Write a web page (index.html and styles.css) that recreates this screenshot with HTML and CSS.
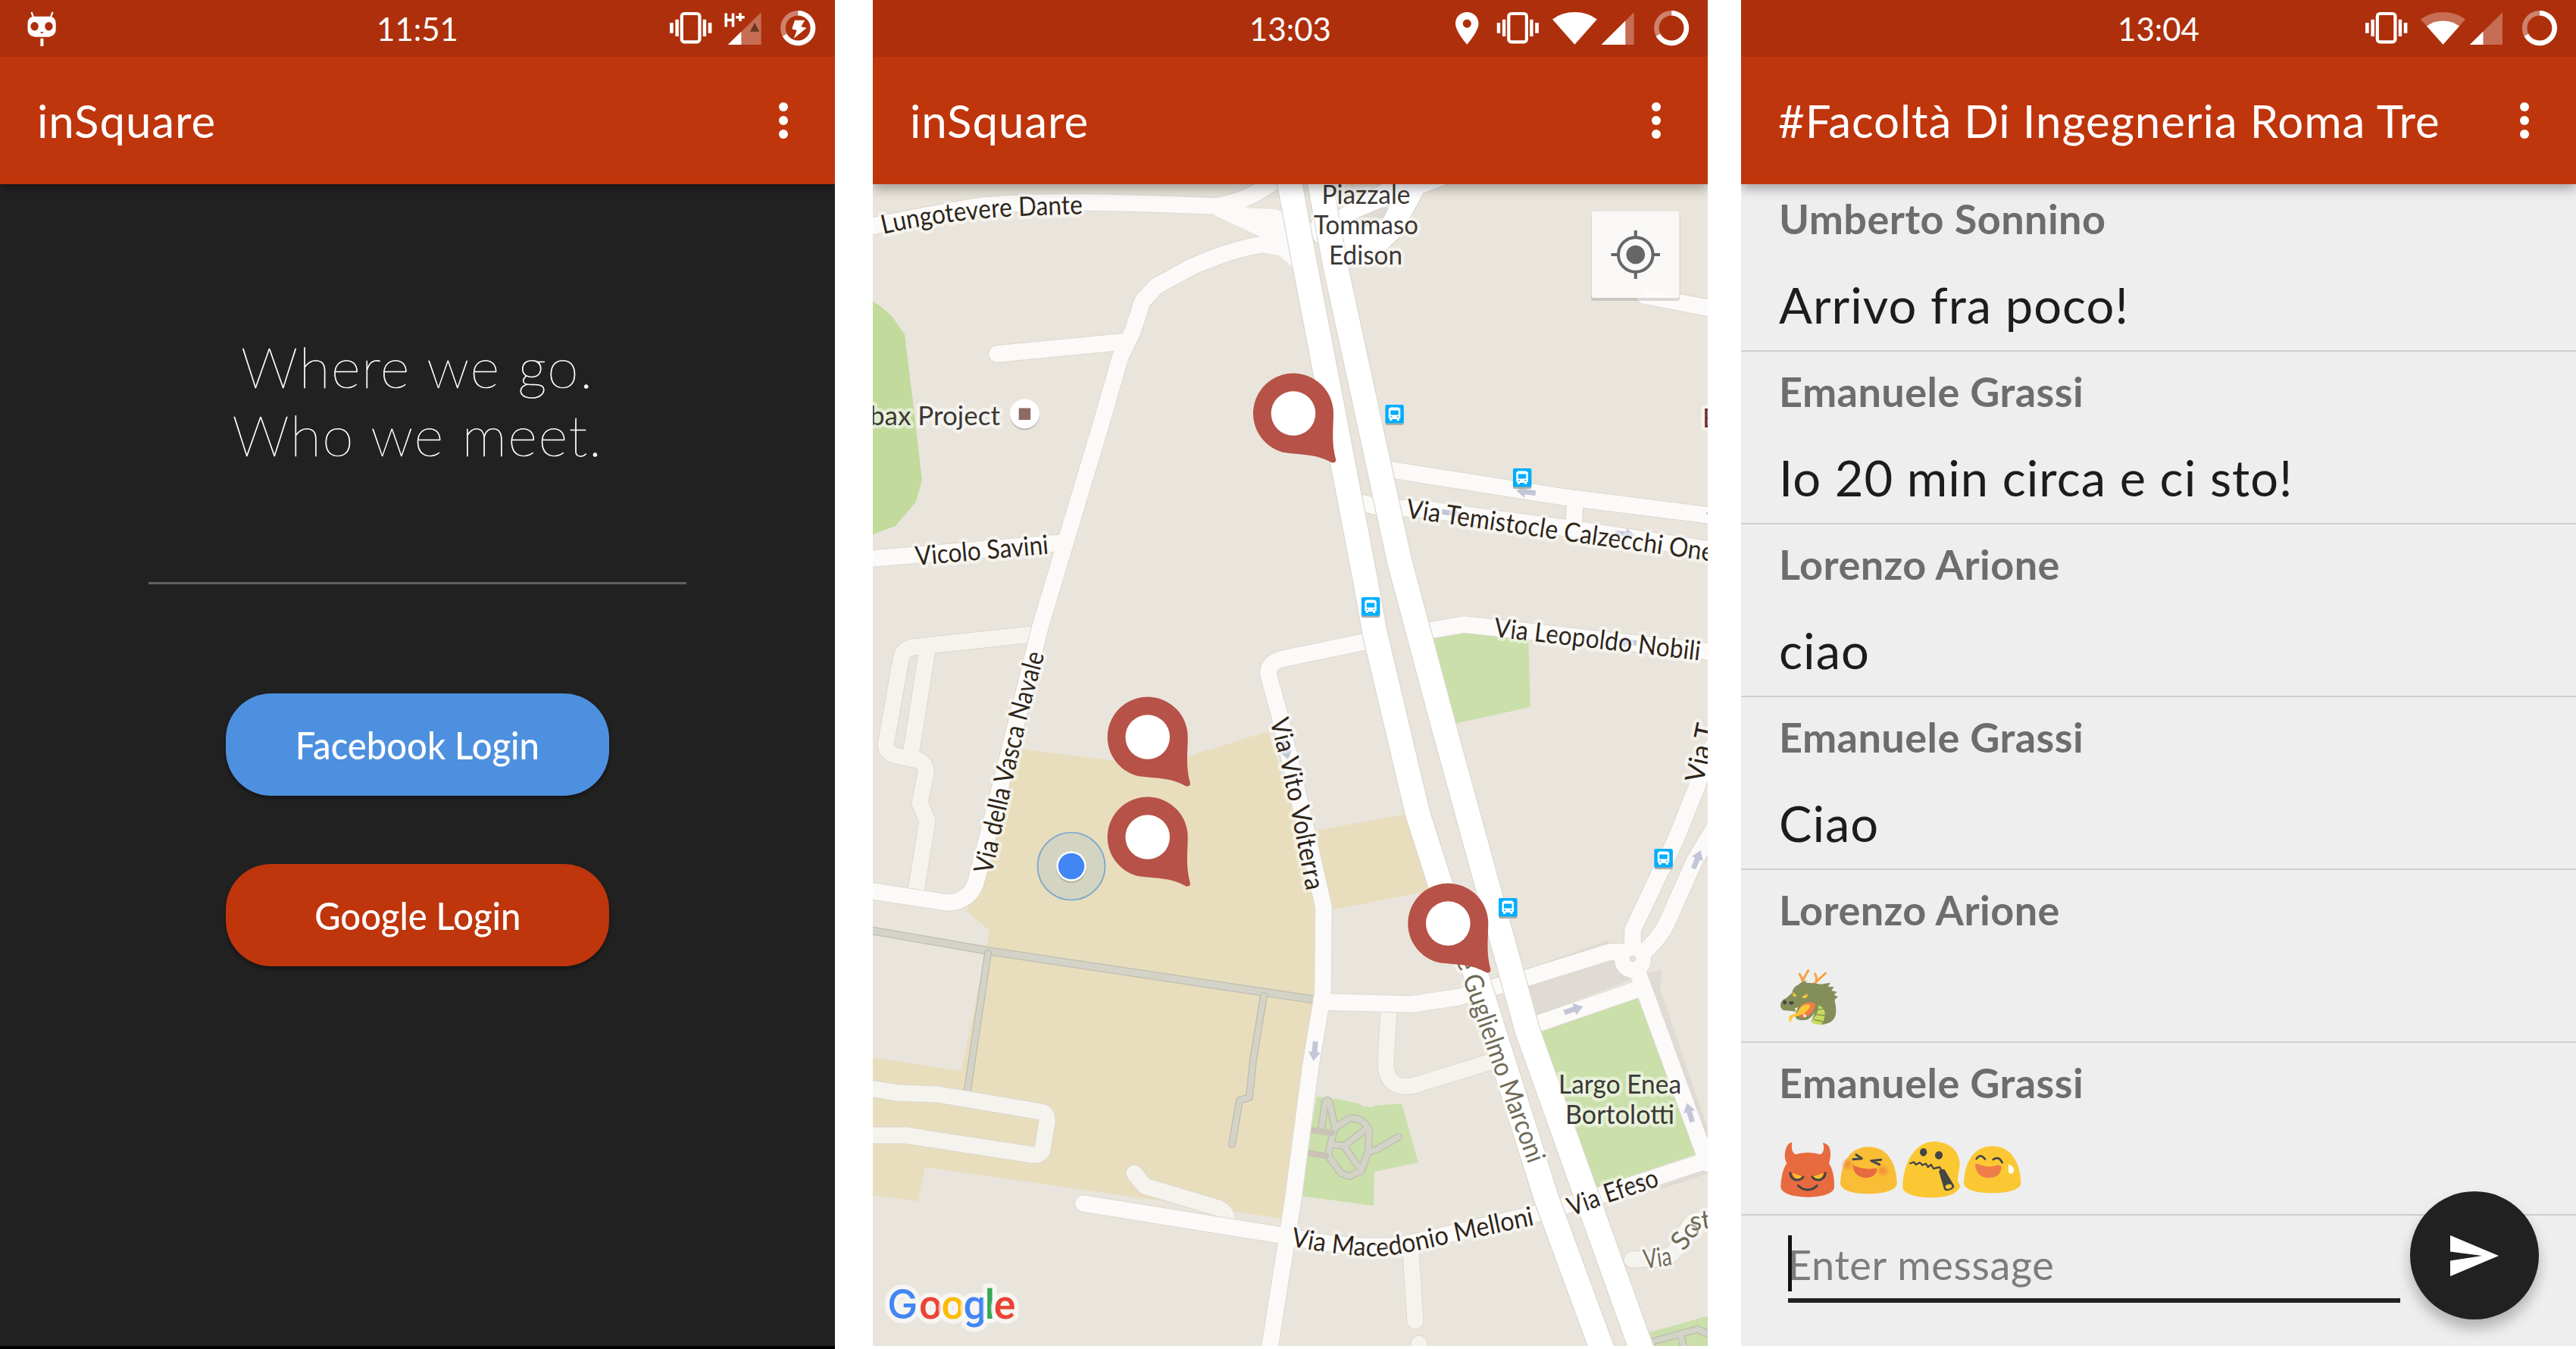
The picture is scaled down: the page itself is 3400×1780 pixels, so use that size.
FILE: index.html
```html
<!DOCTYPE html>
<html lang="it">
<head>
<meta charset="utf-8">
<title>inSquare</title>
<link rel="stylesheet" href="styles.css">
</head>
<body>
<svg class="sprites" aria-hidden="true">
  <defs>
    <symbol id="vibrate" viewBox="0 0 56 75">
      <rect x="15.8" y="18" width="23.6" height="37.3" rx="3.5" fill="none" stroke="#fff" stroke-width="4.2"/>
      <path fill="#fff" d="M7.4 25.7h4.4V48H7.4zM0 30h4.7v13.7H0zM43.7 25.7h4.4V48h-4.4zM50.7 30h4.7v13.7h-4.7z"/>
    </symbol>
    <symbol id="battery" viewBox="0 0 48 75">
      <circle cx="24" cy="37" r="19.8" fill="none" stroke="#fff" stroke-opacity=".4" stroke-width="6.6"/>
      <path d="M24 17.2A19.8 19.8 0 1 1 6.4 46.3" fill="none" stroke="#fff" stroke-width="6.6"/>
    </symbol>
    <symbol id="pin" viewBox="-60 -60 124 134">
      <path fill="#b65247" d="M53 0C53 20 50 38 56 60Q57 65.500 51 65C30 53 12 55-13 51.400A53 53 0 1 1 53 0Z"/>
      <circle r="29.300" fill="#fff"/>
    </symbol>
    <symbol id="bus" viewBox="0 0 26 30">
      <rect y="2.500" width="24.500" height="24.500" rx="2" fill="#b3aea6"/>
      <rect width="24.500" height="24.500" rx="2" fill="#00aeff"/>
      <path fill="#fff" d="M7 3.500h10.500l2.500 2V18h-1.500v3h-3v-2h-6.500v2h-3v-3H4.500V5.500z"/>
      <path fill="#00aeff" d="M7 7.500h10.500v6H7zM7 15.500h2v1.500H7zM15.500 15.500h2v1.500h-2z"/>
    </symbol>
    <symbol id="arrow" viewBox="-14 -9 28 18">
      <path fill="#c3c6d8" d="M-13-3.500H1V-8L13 0 1 8V3.500H-13z"/>
    </symbol>
  </defs>
</svg>

<main class="screens">
  <section class="screen screen-login">
    <header class="top">
      <div class="status">
        <svg class="status-left" width="52" height="75" viewBox="30 0 52 75">
          <path d="M41.500 16l3 8M69.500 16l-3 8" stroke="#fff" stroke-width="2.200" fill="none"/>
          <path fill="#fff" d="M46 21.700h18.500q9.200 0 9.200 9.300v7q0 10.800-12 10.800H49Q36.500 48.800 36.500 38v-7q0-9.300 9.500-9.300zM53.400 50.700h4V61h-4z"/>
          <ellipse cx="45.600" cy="34.800" rx="5.200" ry="5.700" fill="#ae2f0b"/>
          <ellipse cx="64.400" cy="34.800" rx="5.200" ry="5.700" fill="#ae2f0b"/>
          <path d="M53 42h4.600l-2.300 2.600z" fill="#ae2f0b"/>
        </svg>
        <time class="clock">11:51</time>
        <svg class="status-right" width="218" height="75" viewBox="884 0 218 75">
          <use href="#vibrate" x="884" y="0" width="56" height="75"/>
          <path fill="#fff" fill-opacity=".3" d="M960.700 59h44V16.300z"/>
          <path fill="#fff" d="M960.700 59h17.700V41.800z"/>
          <path fill="#6a3527" d="M996 30l6.300 11.700H990z"/>
          <path stroke="#fff" stroke-width="3.600" fill="none" d="M958.200 17.600v17.800M967.500 17.600v17.800M958.200 26.500h9.300M971.300 22.700h11.400M977 17.300v10.800"/>
          <use href="#battery" x="1029.300" y="0" width="48" height="75"/>
          <path fill="#fff" d="M1049 26.700h13.300l-5 8.600 7.400 1.400-17 14 4-10.700-6.400-1.700z"/>
        </svg>
      </div>
      <div class="toolbar"><h1 class="title">inSquare</h1><span class="menu"><i></i><i></i><i></i></span></div>
    </header>
    <div class="login">
      <p class="tagline">Where we go.<br>Who we meet.</p>
      <hr class="rule">
      <button class="btn btn-facebook"><span class="btn-label">Facebook Login</span></button>
      <button class="btn btn-google"><span class="btn-label">Google Login</span></button>
    </div>
  </section>

  <section class="screen screen-map">
    <header class="top">
      <div class="status">
        <span></span>
        <time class="clock">13:03</time>
        <svg class="status-right" width="333" height="75" viewBox="1921 0 333 75">
          <path fill="#fff" fill-rule="evenodd" d="M1936.300 16c8.500 0 15.200 6.600 15.200 15 0 10.500-15.200 27.700-15.200 27.700S1921 41.500 1921 31c0-8.400 6.800-15 15.300-15zm0 9.500a5.600 5.600 0 1 0 0 11.200 5.600 5.600 0 0 0 0-11.200z"/>
          <use href="#vibrate" x="1975.500" y="0" width="56" height="75"/>
          <path fill="#fff" d="M2078.400 58.700L2049 25.500Q2061 16 2078.400 16t29.400 9.500z"/>
          <path fill="#fff" fill-opacity=".3" d="M2113.500 59h43.200V16.300z"/>
          <path fill="#fff" d="M2113.500 59h31.800V27.600z"/>
          <use href="#battery" x="2182.200" y="0" width="48" height="75"/>
        </svg>
      </div>
      <div class="toolbar"><h1 class="title">inSquare</h1><span class="menu"><i></i><i></i><i></i></span></div>
    </header>
    <svg class="map" width="1102" height="1533" viewBox="1152 243 1102 1533">
      <defs>
        <g id="service-roads">
          <path d="M1362 837L1204 854Q1191 857 1189 870L1169 983Q1170 993 1182 997L1212 1003Q1222 1007 1222 1020L1214 1060 1224 1083 1208 1182M1224 857L1203 990"/>
          <path d="M1140 1435L1185 1442 1238 1444 1374 1467Q1383 1469 1382 1480L1376 1517Q1373 1525 1364 1524L1195 1498H1140"/>
          <path d="M1497 1548L1511 1565 1608 1594Q1618 1598 1621 1612"/>
          <path d="M1833 1330L1829 1405Q1831 1431 1851 1433 1861 1434 1870 1431L1968 1401"/>
          <path d="M1862 1650L1868 1743M1873 1773V1800"/>
          <path d="M2154 1662L2198 1660Q2210 1655 2222 1634 2228 1612 2242 1610H2270"/>
        </g>
        <g id="streets">
          <path d="M1140 301Q1220 283 1299 271 1384 264 1525 269L1606 272Q1650 264 1680 240M1606 272Q1660 285 1705 335"/>
          <path d="M1720 330L1677 322Q1640 323 1573 352L1527 377 1508 397 1495 437 1479 470 1454 557 1373 827 1335 980 1290 1157Q1283 1190 1250 1191L1140 1174"/>
          <path d="M1316 467L1482 451M1140 738L1403 716M2170 390L2264 408"/>
          <path d="M1830 619L2065 656 2264 681M1790 662L1820 669 1880 672 2070 697 2264 726M2079 660L2077 697"/>
          <path d="M1875 834L1932 824 1999 831 2264 861M1805 846L1694 869Q1673 874 1674 890L1688 940 1716 1060 1747 1197 1746 1310 1730 1405 1707 1581 1674 1790"/>
          <path d="M1746 1322L1863 1325 1924 1316 2013 1291 2125 1256H2155"/>
          <path d="M2020 1354L2168 1303M2155 1265L2172 1311 2254 1535M2254 1531L2107 1579 2026 1602 1850 1643Q1790 1650 1691 1630L1430 1588"/>
          <path d="M2155 1265L2155 1227 2212 1107 2240 1037 2260 985M2155 1270Q2190 1240 2200 1218L2236 1137 2264 1090"/>
        </g>
        <g id="avenue">
          <path d="M1699 225L1723 353 1801 760 1815 837 1871 1073 1901 1167 1947 1283 2041 1581 2118 1790"/>
          <path d="M1739 225L1763 353 1847 740 1904 953 1980 1230 2016 1360 2090 1567 2170 1790"/>
        </g>
        <g id="footways">
          <path d="M1140 1226L1313 1256 1667 1309 1735 1319"/>
        </g>
        <g id="footpaths">
          <path d="M1304 1258L1277 1438M1668 1314L1654 1399 1649 1448 1636 1452 1626 1510"/>
          <path d="M1744 1490L1749 1455Q1752 1448 1755 1455L1762 1488 1781 1476Q1797 1473 1807 1490L1806 1518 1797 1545 1781 1552 1770 1548 1753 1525 1757 1505 1762 1488M1758 1510L1774 1512 1795 1543M1774 1512L1805 1488M1808 1519L1817 1517 1846 1500"/>
          <path d="M2178 1771L2240 1754 2260 1762M2218 1760L2223 1780"/>
        </g>
      </defs>

      <rect x="1152" y="243" width="1102" height="1533" fill="#e9e5dc"/>
      <path fill="#c2da9c" d="M1150 397L1161 403 1177 417 1194 441 1205 530 1217 633 1209 662 1182 694 1150 706z"/>
      <path fill="#e8ddbd" d="M1345 988L1472 1004 1568 998 1674 965 1746 1200V1314L1692 1608 1557 1588 1221 1540 1212 1585 1150 1577V1395L1269 1413 1301 1258 1306 1228 1276 1202z"/>
      <path fill="#e8ddbd" d="M1730 1097L1858 1074 1890 1175 1755 1201z"/>
      <path fill="#cadfaa" d="M1880 842L1932 830 2017 835 2020 933 1919 955zM2030 1362L2161 1314 2238 1523 2107 1567zM1738 1447L1770 1451 1793 1456 1800 1460 1813 1461 1814 1459 1850 1456 1872 1534 1814 1546 1813 1591 1716 1578zM2170 1760L2256 1736V1780H2170z"/>
      <path fill="#dfdad3" d="M2010 1302L2128 1266 2152 1293 2026 1341zM2026 1275L2121 1241 2130 1250zM2173 1284L2194 1279 2191 1305 2256 1495V1520zM2190 1566L2256 1540V1548L2195 1568z"/>

      <use href="#footways" class="road footway-casing"/><use href="#footways" class="road footway"/>
      <use href="#footpaths" class="road footpath-casing"/><use href="#footpaths" class="road footpath"/>
      <path class="road" stroke="#c9c2b6" stroke-width="8" d="M1724 1490L1758 1495M1724 1521L1750 1525"/>
      <use href="#service-roads" class="road service-casing"/><use href="#service-roads" class="road service"/>
      <use href="#streets" class="road street-casing"/>
      <circle cx="2155" cy="1266" r="25" fill="#dcd8cf"/>
      <use href="#streets" class="road street"/>
      <circle cx="2155" cy="1266" r="24" fill="#fbfaf8"/>
      <circle cx="2155" cy="1265" r="3.500" fill="#e9e5dc" stroke="#dcd8cf" stroke-width="1.500"/>
      <path fill="#fbfaf8" d="M1603 262L1652 275 1684 276 1715 290 1735 360 1706 352 1688 337 1664 333 1663 312 1603 284z"/>
      <path fill="#fff" stroke="#dcd8cf" stroke-width="1.200" d="M1723 307L1742 272 1752 285 1825 242H1914L1879 255 1847 313 1830 330 1815 347 1773 352z"/>
      <path fill="#dfdad3" d="M1785 290L1836 268 1826 289 1800 301z"/>
      <use href="#avenue" class="road avenue-casing"/><use href="#avenue" class="road avenue"/>

      <use href="#arrow" transform="translate(2014 649) rotate(188)" x="-14" y="-9" width="28" height="18"/>
      <use href="#arrow" transform="translate(1916 677) rotate(8)" x="-14" y="-9" width="28" height="18"/>
      <use href="#arrow" transform="translate(2145 705) rotate(8)" x="-14" y="-9" width="28" height="18"/>
      <use href="#arrow" transform="translate(2264 679) rotate(188)" x="-14" y="-9" width="28" height="18"/>
      <use href="#arrow" transform="translate(2147 847) rotate(187)" x="-14" y="-9" width="28" height="18"/>
      <use href="#arrow" transform="translate(1697 990) rotate(75)" x="-14" y="-9" width="28" height="18"/>
      <use href="#arrow" transform="translate(2240 1134) rotate(-68)" x="-14" y="-9" width="28" height="18"/>
      <use href="#arrow" transform="translate(2077 1332) rotate(-18)" x="-14" y="-9" width="28" height="18"/>
      <use href="#arrow" transform="translate(1735 1387) rotate(96)" x="-14" y="-9" width="28" height="18"/>
      <use href="#arrow" transform="translate(2230 1468) rotate(-106)" x="-14" y="-9" width="28" height="18"/>
      <use href="#arrow" transform="translate(2163 1560) rotate(-18)" x="-14" y="-9" width="28" height="18"/>

      <g class="label">
        <path id="p-dante" fill="none" stroke="none" d="M1166 309C1210 298 1280 288 1345 285L1460 281"/>
        <path id="p-temistocle" fill="none" stroke="none" d="M1855 683L1918 692 2070 714 2254 740 2400 761"/>
        <path id="p-nobili" fill="none" stroke="none" d="M1971 840L2024 846 2162 862 2300 878"/>
        <path id="p-navale" fill="none" stroke="none" d="M1309 1154L1338 1024 1356 946 1382 850"/>
        <path id="p-volterra" fill="none" stroke="none" d="M1676 951L1690 1005 1704 1070 1728 1195"/>
        <path id="p-marconi" fill="none" stroke="none" d="M1922 1267L1937 1310 1982 1440 2024 1555"/>
        <path id="p-melloni" fill="none" stroke="none" d="M1703 1644Q1765 1656 1816 1658 1845 1657 1924 1638L2040 1613"/>
        <path id="p-efeso" fill="none" stroke="none" d="M2074 1605L2123 1587 2210 1558"/>
        <path id="p-t" fill="none" stroke="none" d="M2248 1034L2270 930"/>
        <text class="place" x="1744.500" y="269" textLength="117" lengthAdjust="spacingAndGlyphs">Piazzale</text>
        <text class="place" x="1734" y="309" textLength="138" lengthAdjust="spacingAndGlyphs">Tommaso</text>
        <text class="place" x="1754" y="349" textLength="97" lengthAdjust="spacingAndGlyphs">Edison</text>
        <text class="place" x="2057" y="1443" textLength="162" lengthAdjust="spacingAndGlyphs">Largo Enea</text>
        <text class="place" x="2066" y="1482.500" textLength="144" lengthAdjust="spacingAndGlyphs">Bortolotti</text>
        <text class="place" x="1320" y="561" text-anchor="end">obax Project</text>
        <text class="food" x="2247" y="564">E</text>
        <text x="1209" y="746" transform="rotate(-5 1209 745)" textLength="176" lengthAdjust="spacingAndGlyphs">Vicolo Savini</text>
        <text><textPath href="#p-dante" textLength="265" lengthAdjust="spacingAndGlyphs">Lungotevere Dante</textPath></text>
        <text><textPath href="#p-temistocle" textLength="410" lengthAdjust="spacingAndGlyphs">Via Temistocle Calzecchi One</textPath></text>
        <text><textPath href="#p-nobili" textLength="274" lengthAdjust="spacingAndGlyphs">Via Leopoldo Nobili</textPath></text>
        <text><textPath href="#p-navale" textLength="299" lengthAdjust="spacingAndGlyphs">Via della Vasca Navale</textPath></text>
        <text><textPath href="#p-volterra" textLength="230" lengthAdjust="spacingAndGlyphs">Via Vito Volterra</textPath></text>
        <text class="muted"><textPath href="#p-marconi" textLength="286" lengthAdjust="spacingAndGlyphs">e Guglielmo Marconi</textPath></text>
        <text><textPath href="#p-melloni" textLength="328" lengthAdjust="spacingAndGlyphs">Via Macedonio Melloni</textPath></text>
        <text><textPath href="#p-efeso" textLength="124" lengthAdjust="spacingAndGlyphs">Via Efeso</textPath></text>
        <text><textPath href="#p-t">Via T</textPath></text>
        <text class="muted" transform="translate(2171 1674) rotate(-8)" textLength="37" lengthAdjust="spacingAndGlyphs">Via</text>
        <text class="muted" transform="translate(2222 1652) rotate(-52)">So</text>
        <text class="muted" transform="translate(2232 1624) rotate(-8)">st</text>
      </g>

      <circle cx="1352.500" cy="548" r="19.500" fill="#bdb8b0"/>
      <circle cx="1352.500" cy="546" r="19.500" fill="#fff"/>
      <rect x="1344.700" y="538.500" width="15.500" height="15.500" fill="#8d6a63"/>

      <use href="#bus" x="1828.300" y="534" width="26" height="30"/>
      <use href="#bus" x="1996.800" y="618" width="26" height="30"/>
      <use href="#bus" x="1796.800" y="788" width="26" height="30"/>
      <use href="#bus" x="2183.300" y="1120" width="26" height="30"/>
      <use href="#bus" x="1978" y="1185" width="26" height="30"/>

      <circle cx="1414" cy="1143" r="44.500" fill="#88b5d5" fill-opacity=".22" stroke="#7aa9cb" stroke-width="1.700"/>
      <circle cx="1414" cy="1145" r="20" fill="#000" fill-opacity=".15"/>
      <circle cx="1414" cy="1143" r="19.800" fill="#fff"/>
      <circle cx="1414" cy="1143" r="17.300" fill="#4285f4"/>

      <use href="#pin" x="1647" y="485.500" width="124" height="134"/>
      <use href="#pin" x="1454.700" y="912.500" width="124" height="134"/>
      <use href="#pin" x="1454.700" y="1044.500" width="124" height="134"/>
      <use href="#pin" x="1851.300" y="1158.500" width="124" height="134"/>

      <g class="locate">
        <rect x="2100" y="280" width="117.500" height="117" rx="4" fill="#000" fill-opacity=".13"/>
        <rect x="2100.700" y="279" width="116" height="114" rx="3" fill="#f9f8f6"/>
        <path d="M2169 381L2216 393H2172z" fill="#fdfcfb"/>
        <circle cx="2158.800" cy="336" r="22.800" fill="none" stroke="#666" stroke-width="4"/>
        <circle cx="2158.800" cy="336" r="12.300" fill="#666"/>
        <path stroke="#666" stroke-width="4" d="M2126.500 336h9M2182 336h9M2158.800 304v9M2158.800 359v9"/>
      </g>

      <text class="google" y="1740"><tspan class="google-cap" x="1171" fill="#4285f4">G</tspan><tspan x="1213" fill="#ea4335">o</tspan><tspan x="1242.500" fill="#fbbc05">o</tspan><tspan x="1271.500" fill="#4285f4">g</tspan><tspan x="1299.500" fill="#34a853">l</tspan><tspan x="1311.500" fill="#ea4335">e</tspan></text>
    </svg>
  </section>

  <section class="screen screen-chat">
    <header class="top">
      <div class="status">
        <span></span>
        <time class="clock">13:04</time>
        <svg class="status-right" width="278" height="75" viewBox="3122 0 278 75">
          <use href="#vibrate" x="3122" y="0" width="56" height="75"/>
          <path fill="#fff" fill-opacity=".3" d="M3224.500 58.700L3195 25.500Q3207 16 3224.500 16t29.500 9.500z"/>
          <path fill="#fff" d="M3224.500 58.700L3203 34.500Q3212 27.500 3224.500 27.500t21.500 7z"/>
          <path fill="#fff" fill-opacity=".3" d="M3259.800 59h43.200V16.300z"/>
          <path fill="#fff" d="M3259.800 59h17.700V41.500z"/>
          <use href="#battery" x="3328" y="0" width="48" height="75"/>
        </svg>
      </div>
      <div class="toolbar"><h1 class="title">#Facoltà Di Ingegneria Roma Tre</h1><span class="menu"><i></i><i></i><i></i></span></div>
    </header>
    <ul class="messages">
      <li class="message"><b class="author">Umberto Sonnino</b><p class="body">Arrivo fra poco!</p></li>
      <li class="message"><b class="author">Emanuele Grassi</b><p class="body">Io 20 min circa e ci sto!</p></li>
      <li class="message"><b class="author">Lorenzo Arione</b><p class="body">ciao</p></li>
      <li class="message"><b class="author">Emanuele Grassi</b><p class="body">Ciao</p></li>
      <li class="message"><b class="author">Lorenzo Arione</b>
        <p class="body emoji">
          <svg width="80" height="78" viewBox="24 20 240 234">
            <path fill="none" stroke="#f9a040" stroke-width="9" stroke-linecap="round" stroke-linejoin="round" d="M118 76L126 58 140 34M106 48L112 60 118 76M156 94L174 76 209 44M167 47L172 60 172 78"/>
            <path fill="#848e59" d="M76 122Q78 98 104 88 112 78 134 74L130 82Q160 82 190 88L228 82 218 98 242 98 232 114 254 118 242 130 258 138 244 150Q252 180 249 206 242 244 192 248L152 236 168 196Q158 214 138 228 104 236 90 222L92 196 50 192 48 200 42 192Q28 182 30 170 32 150 52 144z"/>
            <path fill="#c5dc5c" d="M180 172Q200 176 206 200 206 230 192 248 168 248 151 238L166 216Q182 196 180 172z"/>
            <path stroke="#848e59" stroke-width="4" fill="none" d="M178 188L202 186M170 208L206 212M162 228L198 236"/>
            <path fill="#ef7d49" d="M108 176Q126 156 160 160 174 166 164 184 150 216 118 220L98 214 124 190z"/>
            <path fill="#fcc934" d="M148 176Q140 190 124 204 100 214 80 218 74 226 70 238 60 236 65 214 76 206 94 204 110 170 134 168 148 166 148 176zM78 120L94 132Q88 142 80 134zM138 126L114 138Q126 150 136 136z"/>
            <ellipse cx="47" cy="160" rx="7" ry="8" fill="#454545"/><ellipse cx="73" cy="162" rx="9" ry="7" fill="#454545"/>
            <path fill="#fff" d="M86 184L98 180 94 196zM120 202L134 214 124 220zM42 192l4 8 6-7z"/>
          </svg>
        </p>
      </li>
      <li class="message"><b class="author">Emanuele Grassi</b>
        <p class="body emoji">
          <svg width="320" height="78" viewBox="24 704 960 234">
            <defs>
              <radialGradient id="blush"><stop offset="0" stop-color="#ee7a3c" stop-opacity=".75"/><stop offset="1" stop-color="#ee7a3c" stop-opacity="0"/></radialGradient>
            </defs>
            <path fill="#e86a3f" d="M76 714Q70 750 88 762 138 746 188 762 208 750 198 716 228 720 228 760 228 780 222 796 244 830 243 892 236 928 138 931 40 928 31 892 32 830 55 796 44 780 48 756 52 718 76 714z"/>
            <path fill="#fcc026" d="M76 836L122 850Q96 880 76 836zM202 836L154 850Q182 880 202 836z"/>
            <path fill="none" stroke="#454545" stroke-width="9" d="M68 832Q70 862 96 863 114 862 122 848M208 832Q206 862 180 863 162 862 154 848"/>
            <path fill="none" stroke="#454545" stroke-width="9" stroke-linecap="round" d="M100 885Q116 902 138 902 160 902 175 885"/>
            <path fill="#f9be35" d="M379 732C450 732 488 790 491 876 490 904 440 918 379 918 316 918 268 904 267 876 270 790 308 732 379 732z"/>
            <circle cx="296" cy="801" r="28" fill="url(#blush)"/><circle cx="435" cy="826" r="28" fill="url(#blush)"/>
            <path fill="none" stroke="#454545" stroke-width="9" stroke-linecap="round" stroke-linejoin="round" d="M330 763L352 778 318 781M428 783L389 787 422 802"/>
            <path fill="#e86a3f" d="M316 804Q364 826 412 816 412 852 370 855 320 852 316 804z"/>
            <path fill="#fbc834" d="M640 711C706 714 740 752 740 806L731 864 742 888C726 922 690 932 628 933 556 932 516 914 514 892 514 800 560 710 640 711z"/>
            <ellipse cx="596" cy="753" rx="14" ry="16" fill="#454545"/><ellipse cx="657" cy="765" rx="15" ry="16" transform="rotate(15 657 765)" fill="#454545"/>
            <path fill="none" stroke="#454545" stroke-width="7" stroke-linecap="round" stroke-linejoin="round" d="M544 797L558 792 566 802 582 794 592 804 606 798 614 812 626 802 636 818 660 812 666 822"/>
            <path fill="#454545" d="M657 828Q668 816 680 822L718 886Q718 900 690 906 678 906 676 894z"/>
            <ellipse cx="696" cy="889" rx="13" ry="9" transform="rotate(-15 696 889)" fill="#fbc834"/>
            <path fill="#fbc834" d="M869 729C940 729 980 790 982 876 980 902 930 915 869 915 806 915 758 902 756 876 758 790 798 729 869 729z"/>
            <path fill="none" stroke="#454545" stroke-width="8" stroke-linecap="round" d="M806 779Q822 756 840 780M872 782Q894 766 908 794"/>
            <path fill="#ef7d49" d="M800 802Q808 794 822 804 856 814 884 806 902 800 905 812 902 854 854 855 806 852 800 802z"/>
            <path fill="#fff" d="M934 801Q956 810 955 828 948 842 936 836 930 828 934 801z"/>
          </svg>
        </p>
      </li>
    </ul>
    <form class="composer">
      <label class="field">Enter message</label>
      <span class="send">
        <svg width="64" height="54" viewBox="0 0 64 54"><path fill="#fff" d="M0 0L64 27 0 54V33.500L42 27 0 21.500z"/></svg>
      </span>
    </form>
  </section>
</main>
</body>
</html>
```
FILE: styles.css
```css
* { box-sizing: border-box; }

body {
  margin: 0;
  background: #fff;
  font-family: Lato, sans-serif;
}

.sprites {
  position: absolute;
  width: 0;
  height: 0;
}

.screens {
  display: flex;
  width: 3400px;
  height: 1780px;
}

.screen {
  display: flex;
  flex-direction: column;
  width: 1102px;
  height: 1776px;
  overflow: hidden;
}

.screen-login {
  height: 1780px;
  margin-right: 50px;
  background: #212121;
  border-bottom: 4px solid #000;
}

.screen-map { margin-right: 44px; }

.screen-chat { background: #eeeeee; }

/* Status bar and toolbar */
.top {
  position: relative;
  z-index: 1;
  flex: none;
  box-shadow: 0 6px 14px rgba(0, 0, 0, .32);
}

.status {
  display: grid;
  grid-template-columns: 1fr auto 1fr;
  height: 75px;
  background: #ae2f0b;
  color: #fff;
}

.status-left { margin-left: 30px; }

.status-right { justify-self: end; }

.clock {
  font-size: 42px;
  line-height: 77px;
}

.toolbar {
  display: flex;
  align-items: center;
  justify-content: space-between;
  height: 168px;
  padding: 0 62px 0 49px;
  background: #bf350c;
  color: #fff;
}

.title {
  margin: 0;
  font-size: 60px;
  font-weight: 400;
  letter-spacing: .9px;
  line-height: 72px;
  white-space: nowrap;
}

.menu {
  display: grid;
  gap: 6px;
}

.menu i {
  width: 12px;
  height: 12px;
  border-radius: 50%;
  background: #fff;
}

/* Login screen */
.login {
  display: flex;
  flex-direction: column;
  align-items: center;
  padding-top: 195px;
}

.tagline {
  margin: 0;
  color: #fff;
  font-size: 75px;
  font-weight: 100;
  line-height: 90px;
  letter-spacing: 1.5px;
  text-align: center;
  -webkit-text-stroke: .7px #fff;
}

.rule {
  width: 710px;
  height: 3px;
  margin: 150px 0 144px;
  border: 0;
  background: #606060;
}

.btn {
  width: 506px;
  height: 135px;
  margin: 0 0 90px;
  padding: 2px 0 0;
  border: 0;
  border-radius: 60px;
  color: #fff;
  font: 500 50px/133px Lato, sans-serif;
  box-shadow: 0 3px 5px rgba(0, 0, 0, .4);
}

.btn-label {
  display: inline-block;
  transform: scaleX(.943);
}

.btn-facebook { background: #4d90df; }

.btn-google { background: #bf350c; }

/* Map */
.map { display: block; }

.road {
  fill: none;
  stroke-linecap: round;
  stroke-linejoin: round;
}

.footway-casing { stroke: #c0bfb3; stroke-width: 11px; }
.footway { stroke: #d3d3c7; stroke-width: 8.5px; }
.footpath-casing { stroke: #bdbcaf; stroke-width: 10px; }
.footpath { stroke: #d3d3c7; stroke-width: 7.5px; }
.service-casing { stroke: #dcd8cf; stroke-width: 23px; }
.service { stroke: #f5f3ee; stroke-width: 21px; }
.street-casing { stroke: #dcd8cf; stroke-width: 23.5px; }
.street { stroke: #fbfaf8; stroke-width: 21.5px; }
.avenue-casing { stroke: #dcd8cf; stroke-width: 34.5px; }
.avenue { stroke: #fff; stroke-width: 32px; }

.label text {
  fill: #2e2519;
  stroke: rgba(255, 255, 255, .5);
  stroke-width: 9px;
  stroke-linejoin: round;
  paint-order: stroke;
  font-size: 35px;
}

.label .place { fill: #3c3835; }
.label .muted { fill: #6e6a58; }
.label .food { fill: #6b2f2f; }

.google {
  font-family: Roboto, sans-serif;
  font-size: 54px;
  font-weight: 500;
  stroke: rgba(255, 255, 255, .6);
  stroke-width: 12px;
  stroke-linejoin: round;
  paint-order: stroke;
}

.google-cap {
  font-family: Inter, sans-serif;
  font-weight: 500;
}

/* Chat */
.messages {
  flex: none;
  margin: -7px 0 0;
  padding: 0;
  list-style: none;
}

.message {
  height: 228px;
  padding: 20px 50px 0;
  border-bottom: 2px solid #cfcfcf;
}

.author {
  display: block;
  color: #6d6d6d;
  font-size: 54px;
  letter-spacing: .45px;
  line-height: 66px;
}

.body {
  margin: 41px 0 0;
  color: #1c1c1c;
  font-size: 65px;
  letter-spacing: 1px;
  line-height: 78px;
}

.emoji { margin-top: 42px; }

.emoji svg { display: block; }

.composer {
  position: relative;
  flex: 1;
  padding: 26px 0 0 62px;
}

.field {
  display: block;
  width: 808px;
  height: 89px;
  border-bottom: 6px solid #212121;
  color: #7c7c7c;
  font-size: 54px;
  letter-spacing: .65px;
  line-height: 77px;
}

.field::before {
  content: "";
  position: absolute;
  width: 5px;
  height: 74px;
  background: #111;
}

.send {
  position: absolute;
  top: -32px;
  left: 883px;
  display: flex;
  align-items: center;
  justify-content: center;
  width: 170px;
  height: 169px;
  border-radius: 50%;
  background: #212121;
  box-shadow: 0 12px 18px rgba(0, 0, 0, .25);
}
```
